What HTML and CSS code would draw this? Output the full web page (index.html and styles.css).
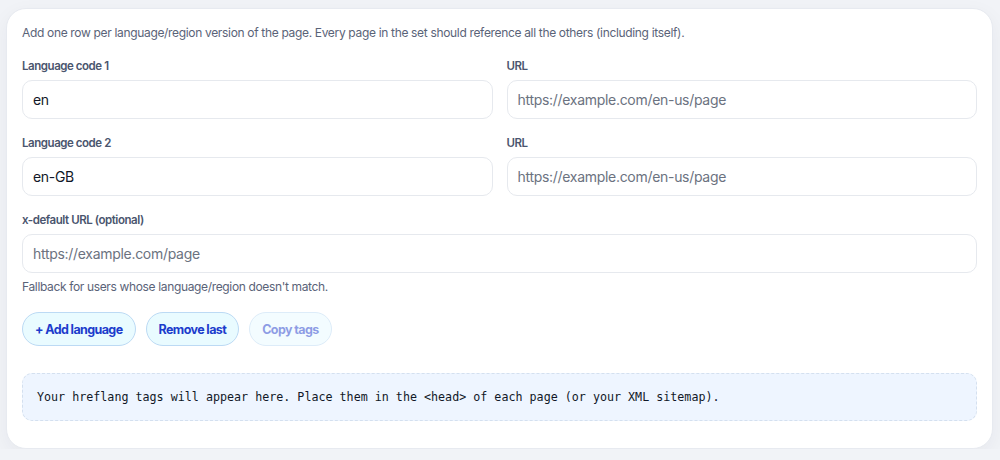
FILE: index.html
```html
<!DOCTYPE html>
<html lang="en">
<head>
<meta charset="utf-8">
<title>hreflang generator</title>
<link rel="stylesheet" href="styles.css">
</head>
<body>
<div class="card">
  <p class="desc">Add one row per language/region version of the page. Every page in the set should reference all the others (including itself).</p>
  <div class="row">
    <div class="field">
      <label class="label">Language code 1</label>
      <input class="input" type="text" value="en">
    </div>
    <div class="field">
      <label class="label">URL</label>
      <input class="input" type="text" placeholder="https://example.com/en-us/page">
    </div>
  </div>
  <div class="row">
    <div class="field">
      <label class="label">Language code 2</label>
      <input class="input" type="text" value="en-GB">
    </div>
    <div class="field">
      <label class="label">URL</label>
      <input class="input" type="text" placeholder="https://example.com/en-us/page">
    </div>
  </div>
  <div class="field">
    <label class="label">x-default URL (optional)</label>
    <input class="input" type="text" placeholder="https://example.com/page">
  </div>
  <p class="hint">Fallback for users whose language/region doesn't match.</p>
  <div class="actions">
    <button class="btn">+ Add language</button>
    <button class="btn">Remove last</button>
    <button class="btn disabled">Copy tags</button>
  </div>
  <pre class="output">Your hreflang tags will appear here. Place them in the &lt;head&gt; of each page (or your XML sitemap).</pre>
</div>
</body>
</html>
```

FILE: styles.css
```css
* { box-sizing: border-box; }
html, body { margin: 0; padding: 0; }
body {
  background: #f1f3f7;
  font-family: Inter, "Noto Sans", "Liberation Sans", sans-serif;
  padding: 8px 7px 0 6px;
}
.card {
  background: #ffffff;
  border: 1px solid #e7eaf0;
  border-radius: 20px;
  box-shadow: 0 6px 20px rgba(30, 41, 59, 0.05);
  padding: 15px 15px 26px 15px;
  height: 441px;
}
.desc {
  margin: 0;
  font-size: 12px;
  letter-spacing: -0.33px;
  line-height: 18px;
  color: #5a6378;
}
.row {
  display: grid;
  grid-template-columns: 1fr 1fr;
  gap: 14px;
  margin-top: 16px;
}
.row + .row { margin-top: 16px; }
.row + .field { margin-top: 16px; }
.field { display: flex; flex-direction: column; }
.label {
  font-size: 11.5px;
  font-weight: 600;
  letter-spacing: -0.45px;
  line-height: 16px;
  color: #4a556e;
  margin-bottom: 6px;
}
.input {
  height: 39px;
  border: 1px solid #e6e9ee;
  border-radius: 10px;
  padding: 0 10px;
  font-family: Inter, "Noto Sans", "Liberation Sans", sans-serif;
  font-size: 14px;
  letter-spacing: -0.3px;
  color: #111827;
  background: #fff;
  outline: none;
}
.input::placeholder { color: #6b7280; }
.hint {
  margin: 5px 0 0;
  font-size: 12px;
  letter-spacing: -0.35px;
  line-height: 18px;
  color: #5a6378;
}
.actions {
  display: flex;
  gap: 10px;
  margin-top: 16px;
}
.btn {
  height: 34px;
  padding: 0 12px;
  border: 1px solid #bcdaf4;
  border-radius: 17px;
  background: #e9fbff;
  color: #1c3ccc;
  font-family: Inter, "Noto Sans", "Liberation Sans", sans-serif;
  font-size: 12.5px;
  letter-spacing: -0.6px;
  font-weight: 700;
}
.btn.disabled { opacity: 0.5; }
.output {
  margin: 27px 0 0;
  height: 48px;
  background: #eef5ff;
  border: 1px dashed #d4e0ef;
  border-radius: 10px;
  padding: 0 14px;
  display: flex;
  align-items: center;
  font-family: "DejaVu Sans Mono", "Liberation Mono", monospace;
  font-size: 11.7px;
  color: #111827;
}
```
